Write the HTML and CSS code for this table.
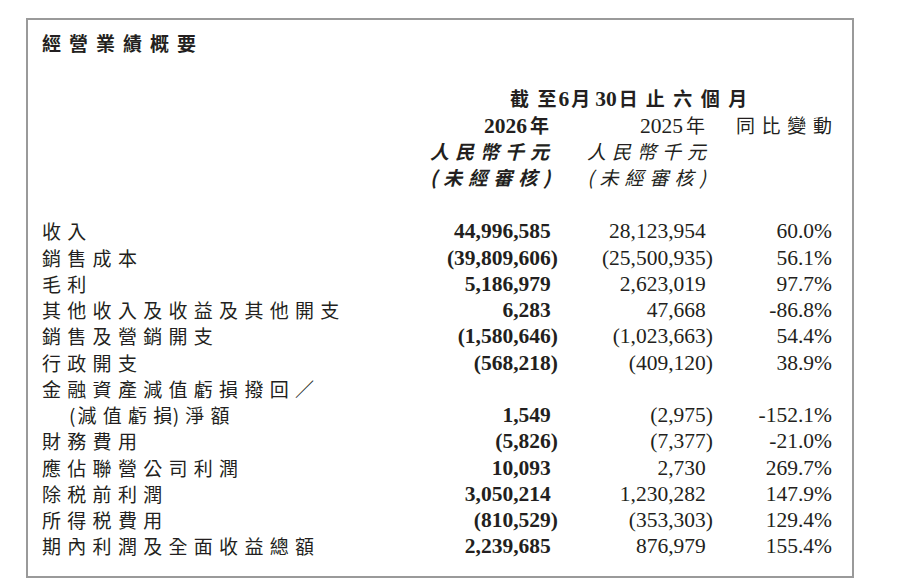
FILE: index.html
```html
<!DOCTYPE html>
<html lang="zh-Hant">
<head>
<meta charset="utf-8">
<title>經營業績概要</title>
<link rel="stylesheet" href="styles.css">
</head>
<body>
<div class="page">
  <section class="box">
    <h1 class="title">經營業績概要</h1>

    <div class="grid head">
      <div class="period">截<span class="t2">至</span><span class="n">6</span><span class="t5">月</span><span class="n">30</span><span class="t8">日</span>止六個<span class="last">月</span></div>

      <div></div>
      <div class="hc c1 b"><span class="yr">2026</span>年</div>
      <div class="hc c2"><span class="yr">2025</span>年</div>
      <div class="hc c3"><span class="ls67">同比變動</span></div>

      <div></div>
      <div class="hc c1i b it"><span class="ls6">人民幣千元</span></div>
      <div class="hc c2i it"><span class="ls6">人民幣千元</span></div>
      <div></div>

      <div></div>
      <div class="hc c1i b it"><span class="ls6">(未經審核)</span></div>
      <div class="hc c2i it"><span class="ls6">(未經審核)</span></div>
      <div></div>
    </div>

    <div class="grid body">
      <div class="label">收入</div>
      <div class="num b pos">44,996,585</div>
      <div class="num pos">28,123,954</div>
      <div class="num">60.0%</div>

      <div class="label">銷售成本</div>
      <div class="num b">(39,809,606)</div>
      <div class="num">(25,500,935)</div>
      <div class="num">56.1%</div>

      <div class="label">毛利</div>
      <div class="num b pos">5,186,979</div>
      <div class="num pos">2,623,019</div>
      <div class="num">97.7%</div>

      <div class="label">其他收入及收益及其他開支</div>
      <div class="num b pos">6,283</div>
      <div class="num pos">47,668</div>
      <div class="num">-86.8%</div>

      <div class="label">銷售及營銷開支</div>
      <div class="num b">(1,580,646)</div>
      <div class="num">(1,023,663)</div>
      <div class="num">54.4%</div>

      <div class="label">行政開支</div>
      <div class="num b">(568,218)</div>
      <div class="num">(409,120)</div>
      <div class="num">38.9%</div>

      <div class="label">金融資產減值虧損撥回／</div>
      <div></div>
      <div></div>
      <div></div>

      <div class="label indent"><span class="pl">(</span>減值虧<span class="tt">損</span><span class="pr">)</span>淨額</div>
      <div class="num b pos">1,549</div>
      <div class="num">(2,975)</div>
      <div class="num">-152.1%</div>

      <div class="label">財務費用</div>
      <div class="num b">(5,826)</div>
      <div class="num">(7,377)</div>
      <div class="num">-21.0%</div>

      <div class="label">應佔聯營公司利潤</div>
      <div class="num b pos">10,093</div>
      <div class="num pos">2,730</div>
      <div class="num">269.7%</div>

      <div class="label">除税前利潤</div>
      <div class="num b pos">3,050,214</div>
      <div class="num pos">1,230,282</div>
      <div class="num">147.9%</div>

      <div class="label">所得税費用</div>
      <div class="num b">(810,529)</div>
      <div class="num">(353,303)</div>
      <div class="num">129.4%</div>

      <div class="label">期內利潤及全面收益總額</div>
      <div class="num b pos">2,239,685</div>
      <div class="num pos">876,979</div>
      <div class="num">155.4%</div>
    </div>
  </section>
</div>
</body>
</html>
```

FILE: styles.css
```css
* {
  box-sizing: border-box;
}

html,
body {
  margin: 0;
  background: #ffffff;
}

body {
  font-family: "Noto Sans CJK TC", "Noto Sans CJK SC", sans-serif;
  color: #231f20;
}

.page {
  padding: 18px 0 0 26px;
}

.box {
  width: 828px;
  border: 2px solid #9a9a9a;
  padding: 10px 20px 16px 14px;
}

.title {
  margin: 0 0 29px;
  font-size: 19px;
  line-height: 26.25px;
  font-weight: 700;
  letter-spacing: 8px;
}

.grid {
  display: grid;
  grid-template-columns: 1fr 128px 155px 119px;
  grid-auto-rows: 26.25px;
  font-size: 19px;
  line-height: 26.25px;
}

.head {
  margin-bottom: 28px;
}

.period {
  grid-column: 2 / 5;
  padding-left: 80px;
  font-weight: 700;
  letter-spacing: 8.5px;
  white-space: nowrap;
}

.period .t2 {
  letter-spacing: 2px;
}

.period .t5 {
  letter-spacing: 5px;
}

.period .t8 {
  letter-spacing: 8px;
}

.period .n {
  font-family: "Liberation Serif", serif;
  font-size: 21.5px;
  letter-spacing: 0;
  margin-right: 2px;
}

.hc {
  text-align: right;
  white-space: nowrap;
}

.c1 {
  padding-right: 9px;
}

.c2 {
  padding-right: 8px;
}

.c3 {
  padding-right: 0;
}

.c1i {
  padding-right: 10px;
}

.c2i {
  padding-right: 7px;
}

.yr {
  font-family: "Liberation Serif", serif;
  font-size: 21.5px;
  margin-right: 3px;
}

.b {
  font-weight: 700;
}

.it {
  font-style: italic;
}

.ls6 {
  letter-spacing: 6px;
  margin-right: -6px;
}

.ls67 {
  letter-spacing: 6.7px;
  margin-right: -6.7px;
}

.label {
  letter-spacing: 6.3px;
  white-space: nowrap;
}

.indent {
  padding-left: 27px;
}

.label .pl {
  letter-spacing: 2px;
}

.label .tt {
  letter-spacing: 0.5px;
}

.label .pr {
  letter-spacing: 6px;
}

.num {
  font-family: "Liberation Serif", serif;
  font-size: 21.5px;
  text-align: right;
  white-space: nowrap;
}

.pos {
  padding-right: 7.2px;
}
```
